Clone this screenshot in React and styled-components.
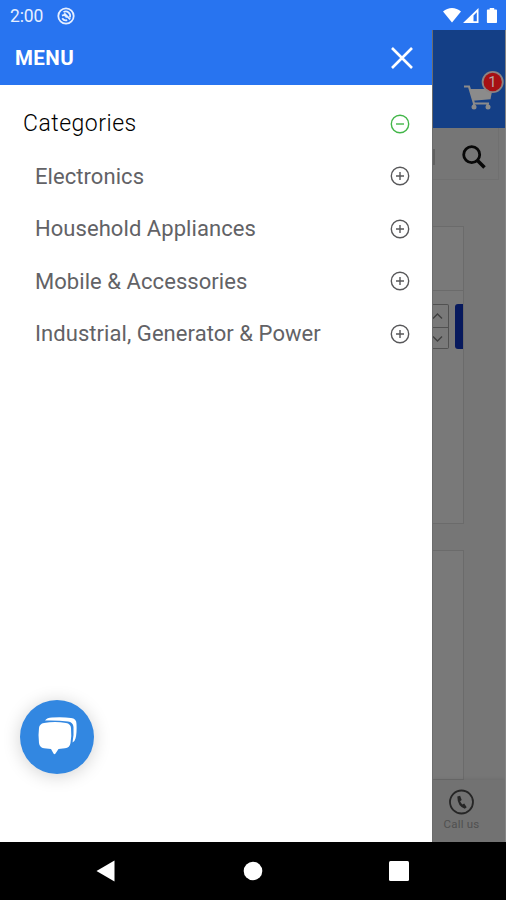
import React from "react";
import styled, { createGlobalStyle } from "styled-components";

const primary = "#2874f0";
const dimmed = "#767676";
const dimmedLine = "#6b6b6b";

const GlobalStyle = createGlobalStyle`
  * {
    box-sizing: border-box;
  }
  body {
    margin: 0;
    background-color: black;
    font-family: Roboto, "Liberation Sans", sans-serif;
  }
  svg {
    display: block;
    flex-shrink: 0;
  }
`;

const Screen = styled.div`
  width: 506px;
  height: 900px;
  display: flex;
  flex-direction: column;
  overflow: hidden;
  position: relative;
`;

const StatusBar = styled.div`
  height: 30px;
  flex-shrink: 0;
  display: flex;
  align-items: center;
  padding: 1px 8px 0 10px;
  color: #e6efff;
  background-color: ${primary};
`;

const Clock = styled.span`
  width: 47px;
  font-size: 17.5px;
  line-height: 30px;
  letter-spacing: -0.1px;
`;

const StatusIcons = styled.div`
  display: flex;
  margin-left: auto;
`;

const Content = styled.div`
  height: 812px;
  flex-shrink: 0;
  display: flex;
`;

const Drawer = styled.div`
  width: 432px;
  flex-shrink: 0;
  background-color: white;
`;

const DrawerHeader = styled.div`
  height: 55px;
  padding: 0 19px 0 15px;
  display: flex;
  align-items: center;
  justify-content: space-between;
  color: white;
  background-color: ${primary};
`;

const DrawerTitle = styled.span`
  font-size: 20.5px;
  font-weight: 700;
  letter-spacing: 0.4px;
`;

const CategoryList = styled.div`
  padding: 12.6px 22px 0 23px;
`;

const Row = styled.div`
  height: 52.5px;
  padding-left: ${({ nested }) => (nested ? "12px" : "0")};
  display: flex;
  align-items: center;
  justify-content: space-between;
  font-size: ${({ nested }) => (nested ? "22px" : "23px")};
  font-weight: ${({ nested }) => (nested ? 400 : 300)};
  white-space: nowrap;
  letter-spacing: ${({ nested }) => (nested ? "0.06px" : "0.5px")};
  color: ${({ nested }) => (nested ? "#626266" : "#000")};
`;

const Page = styled.div`
  width: 74px;
  display: flex;
  flex-direction: column;
  background-color: ${dimmed};
  border-left: 1px solid #6c6c6c;
  border-right: 1px solid #858585;
  overflow: hidden;
`;

const PageHeader = styled.div`
  height: 98px;
  flex-shrink: 0;
  padding: 39px 0 0 30px;
  background-color: #143f86;
`;

const SearchBar = styled.div`
  height: 52px;
  width: 66px;
  margin: 0 0 46px;
  padding: 7px 12px 0 0;
  flex-shrink: 0;
  display: flex;
  align-items: center;
  justify-content: space-between;
  border: 1px solid #707070;
  border-width: 0 1px 1px 0;
`;

const InputEdge = styled.div`
  width: 2px;
  height: 16px;
  background-color: #606060;
`;

const Cards = styled.div`
  width: 31px;
  flex-shrink: 0;
  display: flex;
  flex-direction: column;
  gap: 26px;
`;

const Card = styled.div`
  height: ${({ height }) => height}px;
  background-color: #797979;
  border: 1px solid ${dimmedLine};
  border-left: none;
`;

const CardHead = styled.div`
  height: 64px;
  border-bottom: 1px solid ${dimmedLine};
`;

const Quantity = styled.div`
  display: flex;
  justify-content: space-between;
  margin-top: 13px;
  height: 45px;
`;

const Stepper = styled.div`
  width: 16px;
  border: 1px solid #515151;
  border-left: none;
  border-radius: 0 2px 2px 0;
`;

const Step = styled.div`
  height: 22px;
  display: flex;
  align-items: center;
  & + & {
    border-top: 1px solid #515151;
  }
`;

const BuyButton = styled.div`
  width: 8px;
  height: 45px;
  border-radius: 3px 0 0 3px;
  background-color: #07195d;
`;

const CallUs = styled.div`
  height: 62px;
  margin-top: auto;
  padding: 9px 15px 0 0;
  flex-shrink: 0;
  display: flex;
  flex-direction: column;
  align-items: center;
  font-size: 11.5px;
  line-height: 14px;
  letter-spacing: 0.2px;
  white-space: nowrap;
  gap: 2px;
  color: #505050;
  background-color: #727272;
  box-shadow: 0 -1px 3px rgba(0, 0, 0, 0.08);
`;

const ChatButton = styled.div`
  position: absolute;
  left: 20px;
  top: 700px;
  width: 74px;
  height: 74px;
  border-radius: 50%;
  background-color: #3287e1;
  box-shadow: 0 2px 18px rgba(0, 0, 0, 0.18);
`;

const NavBar = styled.div`
  height: 58px;
  display: flex;
  align-items: center;
  justify-content: space-between;
  padding: 0 97px 0 96px;
  background-color: black;
`;

const NotificationIcon = () => (
  <svg width="18" height="18" viewBox="0 0 18 18" fill="none" stroke="currentColor">
    <circle cx="9" cy="9" r="7.7" strokeWidth="1.8" />
    <path d="M5.2 11.2a4.4 4.4 0 0 0 5 1.9M12.9 10.4a4.4 4.4 0 0 0-6.400-5.300" strokeWidth="1.7" />
    <path d="M7.2 6.400l6 6M5 8.600c2-1.100 4.200-.2 4.600 2" strokeWidth="1.900" />
  </svg>
);

const SignalIcons = () => (
  <svg width="56" height="18" viewBox="0 0 56 18" fill="white">
    <path d="M1 4.5C6.2-.2 13.8-.2 19 4.5L10 15.5z" />
    <path fillRule="evenodd" d="M21 16L36.5 1V16zM31.5 8.5V14.3H34.8V5.3z" />
    <path d="M45.7 2.5h2V.9h4.5v1.6h2q.8 0 .8.8v11.9q0 .8-.8.8h-8.5q-.8 0-.8-.8V3.3q0-.8.8-.8z" />
  </svg>
);

const CloseIcon = () => (
  <svg width="22" height="22" viewBox="0 0 22 22" stroke="white" strokeWidth="2.6">
    <path d="M1 1L21 21M21 1L1 21" />
  </svg>
);

const ToggleIcon = ({ open }) => (
  <svg
    width="20"
    height="20"
    viewBox="0 0 20 20"
    fill="none"
    stroke={open ? "#43b649" : "#58585a"}
    strokeWidth="1.4"
  >
    <circle cx="10" cy="10" r="8.7" />
    <path d={open ? "M6 10H14" : "M6 10H14M10 6V14"} />
  </svg>
);

const CartIcon = () => (
  <svg width="42" height="44" viewBox="0 0 42 44">
    <path
      d="M1 17.5H6L11 34.5H26M11 34V38M24.5 34V38"
      fill="none"
      stroke="#8b8b8b"
      strokeWidth="2.2"
    />
    <path d="M7 20H29.5L27.5 30.2L10 31.8z" fill="#8b8b8b" />
    <circle cx="11" cy="38" r="2.5" fill="#8b8b8b" />
    <circle cx="25" cy="38" r="2.5" fill="#8b8b8b" />
    <circle cx="29.7" cy="13" r="11" fill="#8b8484" />
    <circle cx="29.7" cy="13" r="9.2" fill="#a61014" />
    <text x="29.5" y="18" textAnchor="middle" fontSize="15" fill="#b6a5a5">
      1
    </text>
  </svg>
);

const SearchIcon = () => (
  <svg width="24" height="24" viewBox="0 0 24 24" fill="none" stroke="#080808">
    <circle cx="9.7" cy="9.7" r="8" strokeWidth="2.8" />
    <path d="M15.5 15.5L22.5 22.5" strokeWidth="3.5" />
  </svg>
);

const Chevron = ({ up }) => (
  <svg width="11" height="8" viewBox="0 0 11 8" fill="none" stroke="#3f3f3f" strokeWidth="1.4">
    <path d={up ? "M0 6.5L4.5 2L9 6.5" : "M0 1.5L4.5 6L9 1.5"} />
  </svg>
);

const PhoneIcon = () => (
  <svg width="26" height="26" viewBox="0 0 26 26">
    <circle cx="12.5" cy="13" r="11.5" fill="none" stroke="#262626" strokeWidth="1.8" />
    <path
      d="M8.3 7.600l2.800-.9 1.600 4.300-1.600 1.300q.9 2 2.300 3.100l1.800-.8 2.500 3.600-1.900 1.500q-7.300-2.100-7.500-12.100z"
      fill="#262626"
    />
  </svg>
);

const ChatIcon = () => (
  <svg width="74" height="74" viewBox="0 0 74 74" fill="white">
    <path d="M25 20.5Q27 17.5 32 17.5Q43 16.8 51 18Q56.5 18.5 56.5 24Q57 33 55.5 38.5Q54.8 41.5 52.5 42.5Q54 36 53.5 27Q53 22.2 48 21.5Q37 20 25 20.5z" />
    <path d="M24 23Q35 21 46 23Q50.7 23.8 51 28Q51.8 36 50.5 43Q49.8 47.8 45 48.3L38.5 49L35.5 53.5Q34.5 55 33.5 53.5L31 49L24 48.3Q19.5 47.5 19 43Q18 35 19 28Q19.5 23.8 24 23z" />
  </svg>
);

const categories = [
  "Electronics",
  "Household Appliances",
  "Mobile & Accessories",
  "Industrial, Generator & Power"
];

export default function App() {
  return (
    <>
      <GlobalStyle />
      <Screen>
        <StatusBar>
          <Clock>2:00</Clock>
          <NotificationIcon />
          <StatusIcons>
            <SignalIcons />
          </StatusIcons>
        </StatusBar>
        <Content>
          <Drawer>
            <DrawerHeader>
              <DrawerTitle>MENU</DrawerTitle>
              <CloseIcon />
            </DrawerHeader>
            <CategoryList>
              <Row>
                Categories
                <ToggleIcon open />
              </Row>
              {categories.map(name => (
                <Row nested key={name}>
                  {name}
                  <ToggleIcon />
                </Row>
              ))}
            </CategoryList>
          </Drawer>
          <Page>
            <PageHeader>
              <CartIcon />
            </PageHeader>
            <SearchBar>
              <InputEdge />
              <SearchIcon />
            </SearchBar>
            <Cards>
              <Card height={298}>
                <CardHead />
                <Quantity>
                  <Stepper>
                    <Step>
                      <Chevron up />
                    </Step>
                    <Step>
                      <Chevron />
                    </Step>
                  </Stepper>
                  <BuyButton />
                </Quantity>
              </Card>
              <Card height={230} />
            </Cards>
            <CallUs>
              <PhoneIcon />
              Call us
            </CallUs>
          </Page>
        </Content>
        <NavBar>
          <svg width="19" height="22" viewBox="0 0 19 22" fill="white">
            <path d="M18.5 .5V21.5L0.5 11z" />
          </svg>
          <svg width="22" height="20" viewBox="0 0 22 20" fill="white">
            <circle cx="12" cy="10" r="9.3" />
          </svg>
          <svg width="20" height="20" viewBox="0 0 20 20" fill="white">
            <rect width="20" height="20" rx="1.5" />
          </svg>
        </NavBar>
        <ChatButton>
          <ChatIcon />
        </ChatButton>
      </Screen>
    </>
  );
}
